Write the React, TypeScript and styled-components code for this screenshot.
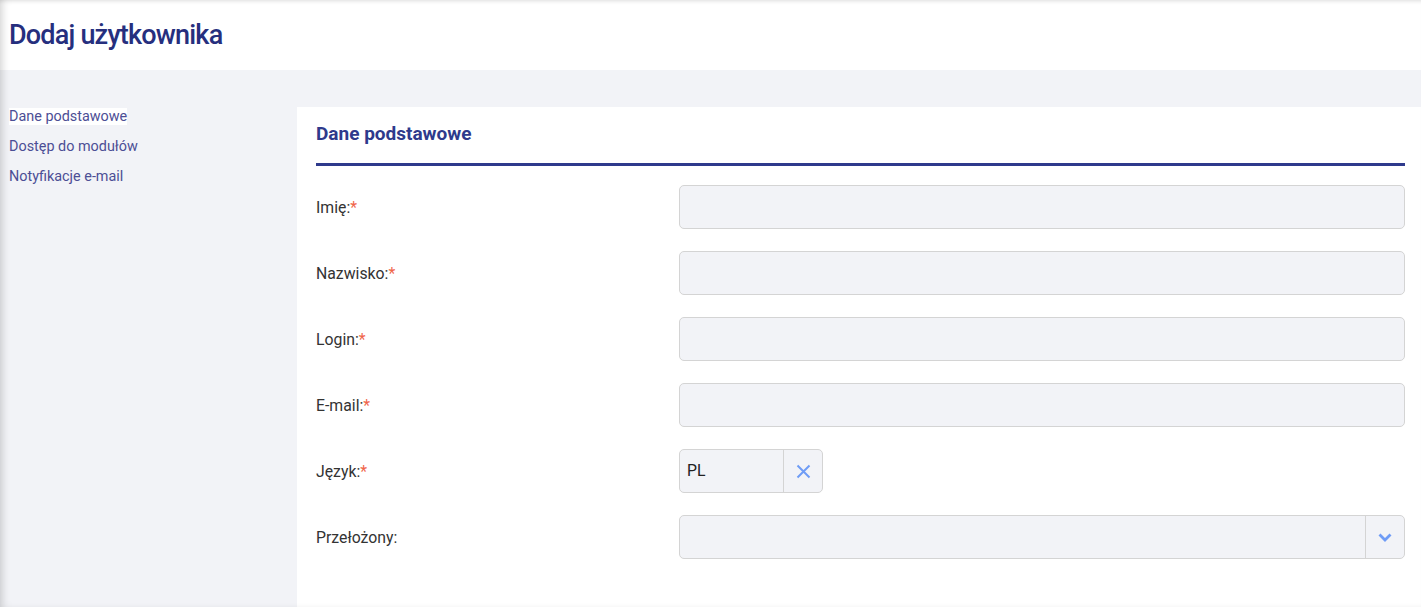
import styled, { createGlobalStyle } from 'styled-components'

const GlobalStyle = createGlobalStyle`
  html, body {
    margin: 0;
    padding: 0;
    background: #f2f3f7;
    font-family: Roboto, "Noto Sans", sans-serif;
  }
  * { box-sizing: border-box; }
`

const Page = styled.div`
  position: relative;
  display: flex;
  flex-direction: column;
  min-height: 100vh;
  background: #f2f3f7;

  &::after {
    content: '';
    position: absolute;
    inset: 0;
    pointer-events: none;
    box-shadow: inset 6px 0 8px -4px rgba(0, 0, 0, 0.18), inset 0 4px 4px -3px rgba(0, 0, 0, 0.1);
  }
`

const TopBar = styled.header`
  height: 70px;
  background: #fff;
  display: flex;
  align-items: center;
  padding-left: 9px;
`

const Title = styled.h1`
  margin: 0;
  font-family: Roboto, sans-serif;
  font-weight: 500;
  font-size: 27px;
  letter-spacing: -0.8px;
  color: #262f7e;
`

const Body = styled.div`
  flex: 1;
  display: grid;
  grid-template-columns: 297px 1fr;
  padding-top: 37px;
`

const Sidebar = styled.nav`
  display: flex;
  flex-direction: column;
  align-items: flex-start;
  padding-left: 9px;
  gap: 13px;
  padding-top: 1px;
`

const NavItem = styled.a<{ $active?: boolean }>`
  font-size: 14.4px;
  line-height: 17px;
  color: #4c4e95;
  text-decoration: none;
  background: ${p => (p.$active ? '#fff' : 'transparent')};
  cursor: pointer;
`

const Panel = styled.section`
  background: #fff;
  padding: 0 16px 40px 19px;
`

const PanelHeader = styled.div`
  height: 59px;
  border-bottom: 3px solid #2e3a8c;
  padding-top: 15px;
`

const PanelTitle = styled.h2`
  margin: 0;
  font-size: 19px;
  font-weight: 700;
  color: #2e3a8c;
`

const Form = styled.div`
  display: flex;
  flex-direction: column;
  gap: 22px;
  padding-top: 19px;
`

const Row = styled.div`
  display: grid;
  grid-template-columns: 363px 1fr;
  align-items: center;
  min-height: 44px;
`

const Label = styled.label`
  font-size: 15.8px;
  color: #333;
`

const Required = styled.span`
  color: #f0654a;
`

const Input = styled.input`
  height: 44px;
  width: 100%;
  background: #f2f3f7;
  border: 1px solid #d4d4d4;
  border-radius: 5px;
  padding: 0 8px;
  font: inherit;
  outline: none;
`

const SelectBox = styled.div<{ $width?: string }>`
  display: flex;
  height: 44px;
  width: ${p => p.$width || '100%'};
  background: #f2f3f7;
  border: 1px solid #d4d4d4;
  border-radius: 5px;
`

const SelectValue = styled.div`
  flex: 1;
  display: flex;
  align-items: center;
  padding-left: 7px;
  font-size: 15.8px;
  color: #222;
  padding-bottom: 2px;
`

const SelectButton = styled.div`
  width: 39px;
  border-left: 1px solid #d4d4d4;
  display: flex;
  align-items: center;
  justify-content: center;
  color: #6f9cf6;
`

const fields = ['Imię', 'Nazwisko', 'Login', 'E-mail']

export default function App() {
  return (
    <>
      <GlobalStyle />
      <Page>
        <TopBar>
          <Title>Dodaj użytkownika</Title>
        </TopBar>
        <Body>
          <Sidebar>
            <NavItem $active>Dane podstawowe</NavItem>
            <NavItem>Dostęp do modułów</NavItem>
            <NavItem>Notyfikacje e-mail</NavItem>
          </Sidebar>
          <Panel>
            <PanelHeader>
              <PanelTitle>Dane podstawowe</PanelTitle>
            </PanelHeader>
            <Form>
              {fields.map(f => (
                <Row key={f}>
                  <Label>
                    {f}:<Required>*</Required>
                  </Label>
                  <Input />
                </Row>
              ))}
              <Row>
                <Label>
                  Język:<Required>*</Required>
                </Label>
                <SelectBox $width="144px">
                  <SelectValue>PL</SelectValue>
                  <SelectButton>
                    <svg width="15" height="15" viewBox="0 0 15 15" fill="none" stroke="currentColor" strokeWidth="2">
                      <path d="M1.5 1.5l12 12M13.5 1.5l-12 12" />
                    </svg>
                  </SelectButton>
                </SelectBox>
              </Row>
              <Row>
                <Label>Przełożony:</Label>
                <SelectBox>
                  <SelectValue />
                  <SelectButton>
                    <svg width="14" height="9" viewBox="0 0 14 9" fill="none" stroke="currentColor" strokeWidth="2.8">
                      <path d="M1.5 1.5l5.5 5.5 5.5-5.5" />
                    </svg>
                  </SelectButton>
                </SelectBox>
              </Row>
            </Form>
          </Panel>
        </Body>
      </Page>
    </>
  )
}
